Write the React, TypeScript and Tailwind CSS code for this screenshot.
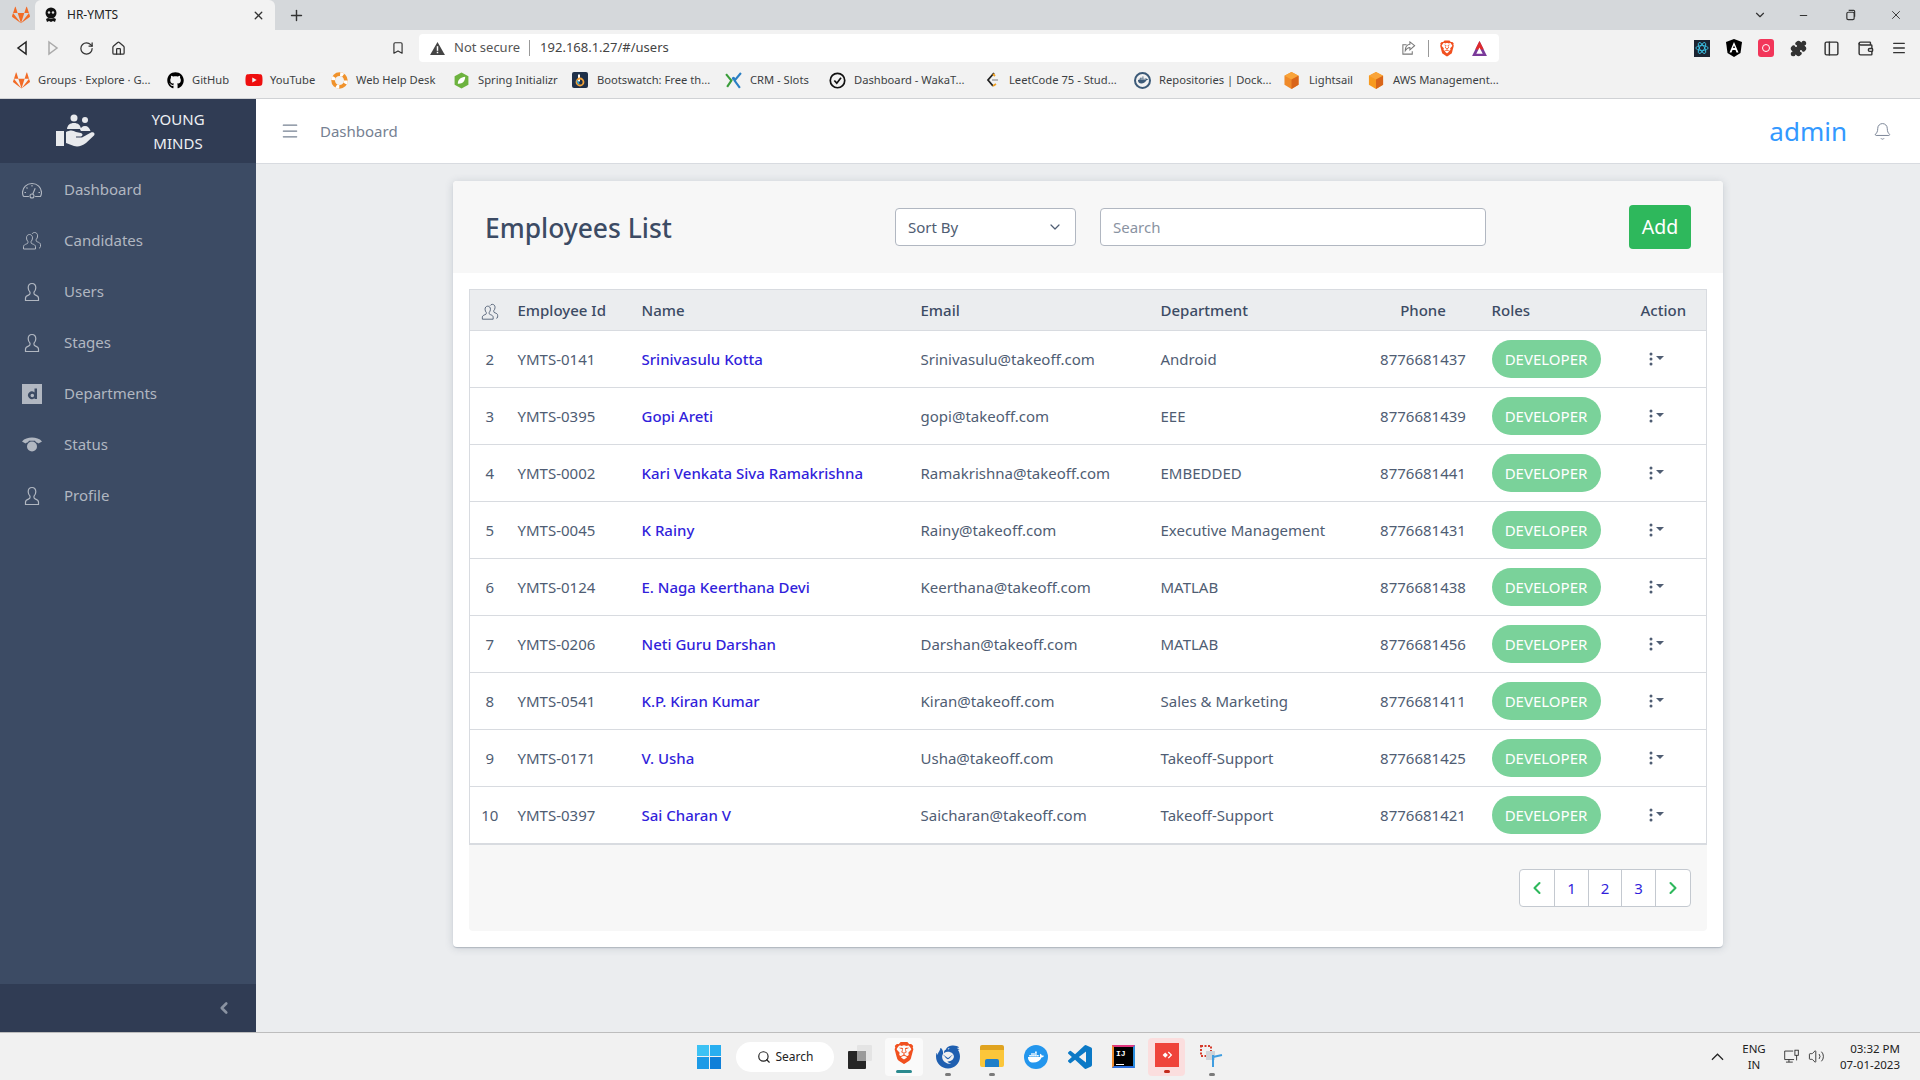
import { Bell, ChevronDown, ChevronLeft, ChevronRight, Menu, Minus, Plus, RotateCw, Search, X, Home, Bookmark, Puzzle, Wallet, PanelLeft, Volume2 } from "lucide-react";
import { FaGithub, FaGitlab, FaYoutube, FaDocker } from "react-icons/fa";
import { SiBrave, SiThunderbird } from "react-icons/si";

const rows = [
  ["2", "YMTS-0141", "Srinivasulu Kotta", "Srinivasulu@takeoff.com", "Android", "8776681437"],
  ["3", "YMTS-0395", "Gopi Areti", "gopi@takeoff.com", "EEE", "8776681439"],
  ["4", "YMTS-0002", "Kari Venkata Siva Ramakrishna", "Ramakrishna@takeoff.com", "EMBEDDED", "8776681441"],
  ["5", "YMTS-0045", "K Rainy", "Rainy@takeoff.com", "Executive Management", "8776681431"],
  ["6", "YMTS-0124", "E. Naga Keerthana Devi", "Keerthana@takeoff.com", "MATLAB", "8776681438"],
  ["7", "YMTS-0206", "Neti Guru Darshan", "Darshan@takeoff.com", "MATLAB", "8776681456"],
  ["8", "YMTS-0541", "K.P. Kiran Kumar", "Kiran@takeoff.com", "Sales & Marketing", "8776681411"],
  ["9", "YMTS-0171", "V. Usha", "Usha@takeoff.com", "Takeoff-Support", "8776681425"],
  ["10", "YMTS-0397", "Sai Charan V", "Saicharan@takeoff.com", "Takeoff-Support", "8776681421"],
];

function UserIcon({ className = "" }: { className?: string }) {
  return (
    <svg viewBox="0 0 20 20" fill="none" stroke="currentColor" strokeWidth="1.2" className={className}>
      <path d="M10 1.500c-2.300 0-3.800 1.700-3.800 4.200 0 2 .8 3.500 1.800 4.500v1.400c0 .7-.5 1.100-1.600 1.500-1.600.6-2.900 1.300-2.900 3v2.400h13v-2.400c0-1.700-1.300-2.400-2.900-3-1.100-.4-1.600-.8-1.600-1.500v-1.400c1-1 1.800-2.500 1.800-4.500 0-2.500-1.500-4.200-3.800-4.200z" />
    </svg>
  );
}
function PeopleIcon({ className = "" }: { className?: string }) {
  return (
    <svg viewBox="0 0 20 20" fill="none" stroke="currentColor" strokeWidth="1" className={className}>
      <path d="M7.500 3.500c-1.800 0-3 1.400-3 3.400 0 1.600.6 2.800 1.400 3.600v1.200c0 .6-.4.9-1.300 1.200-1.600.6-3.100 1.200-3.100 2.800v2.300h12v-2.300c0-1.600-1.500-2.200-3.100-2.800-.9-.3-1.300-.6-1.300-1.200v-1.200c.8-.8 1.400-2 1.400-3.600 0-2-1.200-3.400-3-3.400z" />
      <path d="M10 3c.6-1 1.500-1.500 2.600-1.500 1.800 0 3 1.400 3 3.400 0 1.600-.6 2.800-1.400 3.600v1.200c0 .6.4.9 1.300 1.200 1.600.6 3 1.200 3 2.800v1.800c0 .8-.6 1.500-1.500 1.500" />
    </svg>
  );
}
function GaugeIcon({ className = "" }: { className?: string }) {
  return (
    <svg viewBox="0 0 20 20" fill="none" stroke="currentColor" strokeWidth="1.100" className={className}>
      <path d="M1.500 16.500C.9 15.400.5 14 .5 12.600 .5 7.300 4.800 3.500 10 3.500s9.500 3.800 9.500 9.100c0 1.400-.4 2.800-1 3.900h-5.400M6.900 16.500H1.500" />
      <circle cx="10" cy="16" r="2" />
      <path d="M10.700 14.200l2.500-6M4 12.500h-1.500M5.500 8.500l-1-1M10 6.500v-1.500M16.500 12.500h1.500" />
    </svg>
  );
}
function Fox({ className = "" }: { className?: string }) {
  return <FaGitlab className={"text-[#f26b26] " + className} />;
}
function Cube({ color, className = "" }: { color: string; className?: string }) {
  return (
    <svg viewBox="0 0 16 18" className={className}>
      <polygon points="8,0 15.500,4 15.500,13.500 8,18 .5,13.500 .5,4" fill={color} />
      <polygon points="8,0 15.500,4 8,8 .5,4" fill="#f9a43a" />
      <polygon points="8,8 15.500,4 15.500,13.500 8,18" fill="#d9651a" />
    </svg>
  );
}

const bookmarks: [string, number, any][] = [
  ["Groups · Explore · G...", 154, <Fox className="w-[17px] h-[17px]" />],
  ["GitHub", 78, <FaGithub className="w-[17px] h-[17px] text-black" />],
  ["YouTube", 86, <FaYoutube className="w-[18px] h-[18px] text-[#ee0f0f]" />],
  ["Web Help Desk", 122, (
    <svg viewBox="0 0 16 16" className="w-[17px] h-[17px]">
      <circle cx="8" cy="8" r="6" fill="none" stroke="#f0922b" strokeWidth="3.500" />
      <circle cx="8" cy="8" r="6" fill="none" stroke="#fff" strokeWidth="3.500" strokeDasharray="3 6.400" />
    </svg>
  )],
  ["Spring Initializr", 119, (
    <svg viewBox="0 0 16 16" className="w-[17px] h-[17px]">
      <polygon points="8,.5 14.500,4 14.500,12 8,15.500 1.500,12 1.500,4" fill="#6db33f" />
      <path d="M4.500 11c0-4 3-6 7-6.500-.2 4.500-3 7-7 6.500z" fill="#fff" />
    </svg>
  )],
  ["Bootswatch: Free th...", 153, (
    <svg viewBox="0 0 16 16" className="w-[16px] h-[16px]">
      <rect width="16" height="16" rx="2" fill="#1f3049" />
      <path d="M7 2.500v7" stroke="#fff" strokeWidth="2" />
      <circle cx="8" cy="10" r="3.500" fill="none" stroke="#f3a33a" strokeWidth="1.800" />
      <path d="M5 8.500l2 3.500" stroke="#29a8e0" strokeWidth="1.500" />
    </svg>
  )],
  ["CRM - Slots", 104, (
    <svg viewBox="0 0 16 16" className="w-[17px] h-[17px]" fill="none">
      <path d="M1 2l5 6-4 6" stroke="#3a9d3a" strokeWidth="2" />
      <path d="M15 1l-6 7 5 7" stroke="#2a7fc4" strokeWidth="2" />
      <circle cx="8" cy="6" r="1.500" fill="#2a7fc4" />
    </svg>
  )],
  ["Dashboard - WakaT...", 155, (
    <svg viewBox="0 0 16 16" className="w-[17px] h-[17px]" fill="none" stroke="#111" strokeWidth="1.600">
      <circle cx="8" cy="8" r="6.800" />
      <path d="M5 8l2.300 2.500 4-5" />
    </svg>
  )],
  ["LeetCode 75 - Stud...", 150, (
    <svg viewBox="0 0 16 16" className="w-[16px] h-[16px]" fill="none" strokeWidth="1.800">
      <path d="M10 1L4 8l5 6" stroke="#222" />
      <path d="M11 4l-2-2M9 14l3-2" stroke="#f0a020" />
      <path d="M8 8h6" stroke="#b0b0b0" />
    </svg>
  )],
  ["Repositories | Dock...", 150, (
    <span className="flex items-center justify-center w-[17px] h-[17px] rounded-full border-2 border-[#3c5a78]">
      <FaDocker className="w-[10px] h-[10px] text-[#3c5a78]" />
    </span>
  )],
  ["Lightsail", 84, <Cube color="#ef8a2a" className="w-[15px] h-[17px]" />],
  ["AWS Management...", 140, <Cube color="#f79a1f" className="w-[16px] h-[17px]" />],
];

const nav: [string, any][] = [
  ["Dashboard", <GaugeIcon className="w-[20px] h-[20px]" />],
  ["Candidates", <PeopleIcon className="w-[20px] h-[20px]" />],
  ["Users", <UserIcon className="w-[20px] h-[20px]" />],
  ["Stages", <UserIcon className="w-[20px] h-[20px]" />],
  ["Departments", (
    <svg viewBox="0 0 20 20" className="w-[20px] h-[20px]">
      <rect width="20" height="20" fill="#b1b7c1" />
      <path d="M12.500 4.500h2.500v10.500h-2.500v-1a3.800 3.800 0 1 1 0-5.500zM10.300 9.700a1.800 1.800 0 1 0 0 3.600 1.800 1.800 0 0 0 0-3.600z" fill="#3c4b64" fillRule="evenodd" />
    </svg>
  )],
  ["Status", (
    <svg viewBox="0 0 20 20" className="w-[20px] h-[20px]" fill="#b1b7c1">
      <path d="M0 6.500C2.500 3.500 6 2.500 10 2.500s7.500 1 10 4l-3.500 2c-.8-.8-1.500-1-2.500-1.200L13 5.800H7l-1 1.500c-1 .2-1.700.4-2.500 1.200z" />
      <circle cx="10" cy="11.500" r="5" />
    </svg>
  )],
  ["Profile", <UserIcon className="w-[20px] h-[20px]" />],
];

function ActionIcon() {
  return (
    <svg viewBox="0 0 16 14" className="w-[16px] h-[14px] text-[#4f5d73] -mt-[1px]" fill="currentColor">
      <circle cx="2" cy="2" r="1.500" />
      <circle cx="2" cy="7" r="1.500" />
      <circle cx="2" cy="12" r="1.500" />
      <polygon points="7,4 15,4 11,8" />
    </svg>
  );
}

function Bookmarks() {
  return (
    <div className="h-[33px] flex items-center pb-[4px] pl-[13px] bg-[#f2f2f2] border-b border-[#d0d2d5]">
      {bookmarks.map(([t, w, icon]) => (
        <div key={t} className="flex items-center shrink-0" style={{ width: w }}>
          <span className="w-[25px] shrink-0 flex items-center">{icon}</span>
          <span className="text-[11.200px] text-[#3c3f43] whitespace-nowrap">{t}</span>
        </div>
      ))}
    </div>
  );
}

function Browser() {
  return (
    <div className="shrink-0 font-['Noto_Sans',sans-serif]">
      <div className="h-[30px] bg-[#d5d8db] flex items-end">
        <div className="w-[35px] h-[30px] flex items-center justify-center"><Fox className="w-[18px] h-[18px] ml-[6px]" /></div>
        <div className="w-[240px] h-[30px] bg-[#f2f2f2] rounded-t-[6px] flex items-center pl-[8px] pr-[10px]">
          <svg viewBox="0 0 16 16" className="w-[16px] h-[16px] shrink-0 mr-[8px]">
            <circle cx="8" cy="6" r="5.500" fill="#111" />
            <circle cx="6" cy="5.500" r="1.200" fill="#ddd" />
            <circle cx="10" cy="5.500" r="1.200" fill="#ddd" />
            <path d="M3 12l2-1 3 1 3-1 2 1-1 3-2-1-2 1-2-1-2 1z" fill="#111" />
          </svg>
          <span className="text-[12px] text-[#222] flex-1">HR-YMTS</span>
          <X className="w-[13px] h-[13px] text-[#333]" strokeWidth={2.500} />
        </div>
        <div className="w-[42px] h-[30px] flex items-center justify-center"><Plus className="w-[17px] h-[17px] text-[#333]" strokeWidth={2} /></div>
        <div className="flex-1 h-[30px] flex items-center justify-end text-[#333]">
          <ChevronDown className="w-[14px] h-[14px] mr-[31px]" />
          <Minus className="w-[11px] h-[11px] mr-[36px]" strokeWidth={2.500} />
          <svg viewBox="0 0 12 12" className="w-[11px] h-[12px] mr-[33px]" fill="none" stroke="currentColor" strokeWidth="1.300"><rect x="2" y="3" width="8" height="8" rx="1.500" /><path d="M4 1h5.500a1 1 0 0 1 1 1v6" /></svg>
          <X className="w-[14px] h-[14px] mr-[17px]" strokeWidth={1.600} />
        </div>
      </div>
      <div className="h-[36px] bg-[#f2f2f2] flex items-center text-[#333]">
        <svg viewBox="0 0 12 16" className="w-[12px] h-[16px] ml-[16px]" fill="none" stroke="#222" strokeWidth="1.500"><path d="M10 2L2 8l8 6z" /></svg>
        <svg viewBox="0 0 12 16" className="w-[12px] h-[16px] ml-[19px]" fill="none" stroke="#aaa" strokeWidth="1.500"><path d="M2 2l8 6-8 6z" /></svg>
        <RotateCw className="w-[15px] h-[15px] ml-[20px]" strokeWidth={2} />
        <Home className="w-[15px] h-[15px] ml-[17px]" strokeWidth={2} />
        <Bookmark className="w-[14px] h-[16px] ml-[265px]" strokeWidth={2} />
        <div className="ml-[14px] w-[1080px] h-[28px] bg-white rounded-[4px] flex items-center pl-[11px] pr-[11px]">
          <svg viewBox="0 0 16 14" className="w-[15px] h-[13px]"><path d="M8 0l8 14H0z" fill="#444" /><rect x="7.200" y="4.500" width="1.600" height="5" fill="#fff" /><rect x="7.200" y="10.500" width="1.600" height="1.600" fill="#fff" /></svg>
          <span className="text-[13px] text-[#555] ml-[9px]">Not secure</span>
          <span className="w-px h-[16px] bg-[#999] mx-[9px]" />
          <span className="text-[13px] text-[#444] flex-1 pl-[1px]">192.168.1.27/#/users</span>
          <svg viewBox="0 0 16 16" className="w-[15px] h-[15px] mr-[12px]" fill="none" stroke="#777" strokeWidth="1.100"><path d="M6 4H2v10h10v-3" /><path d="M14.500 5L9.500 1v2.500C6 4 4.500 6.500 4.500 10.500 6 8 7.500 7 9.500 7v2.500z" /></svg>
          <span className="w-px h-[17px] bg-[#999] mr-[10px]" />
          <SiBrave className="w-[16px] h-[17px] text-[#f1501f] mr-[16px]" />
          <svg viewBox="0 0 16 16" className="w-[17px] h-[17px]"><path d="M8 1l7 14H1z" fill="#7a3a9a" /><path d="M8 1l4 8H4z" fill="#e02a2a" /><path d="M8 7l3 6H5z" fill="#fff" /></svg>
        </div>
        <div className="flex items-center ml-[195px] gap-[16px]">
          <span className="w-[16px] h-[17px] bg-[#1b2432] flex items-center justify-center">
            <svg viewBox="0 0 16 16" className="w-[14px] h-[14px]" fill="none" stroke="#3cc4e8" strokeWidth="1"><ellipse cx="8" cy="8" rx="7" ry="2.800" /><ellipse cx="8" cy="8" rx="7" ry="2.800" transform="rotate(60 8 8)" /><ellipse cx="8" cy="8" rx="7" ry="2.800" transform="rotate(120 8 8)" /></svg>
          </span>
          <svg viewBox="0 0 16 18" className="w-[16px] h-[18px]"><path d="M8 0l8 3-1.500 11L8 18l-6.500-4L0 3z" fill="#000" /><path d="M8 3l4.500 10.500h-2L9.500 11h-3l-1 2.500h-2zM8 6.500L7 9h2z" fill="#fff" /></svg>
          <span className="w-[16px] h-[18px] rounded-[3px] bg-[#f2365a] flex items-center justify-center"><span className="w-[8px] h-[8px] rounded-full border border-white" /></span>
          <Puzzle className="w-[17px] h-[17px] text-[#333] fill-[#333]" />
          <PanelLeft className="w-[17px] h-[17px] text-[#333]" strokeWidth={2} />
          <Wallet className="w-[17px] h-[17px] text-[#333] ml-[1px]" strokeWidth={2} />
          <Menu className="w-[16px] h-[16px] text-[#333] ml-[1px]" strokeWidth={2} />
        </div>
      </div>
      <Bookmarks />
    </div>
  );
}

function Dot() {
  return <span className="absolute top-[28px] left-1/2 -translate-x-1/2 w-[6px] h-[3px] rounded-full bg-[#7a7a7a]" />;
}

function Taskbar() {
  return (
    <div className="h-[48px] shrink-0 bg-[#f1f1f1] border-t border-[#bdbdbd] flex items-center font-['Noto_Sans',sans-serif]">
      <div className="ml-[697px] w-[24px] h-[24px] grid grid-cols-2 gap-[1px] shrink-0">
        <span className="bg-[#3cc2f4]" /><span className="bg-[#28aef0]" /><span className="bg-[#1c9ae6]" /><span className="bg-[#0f7fd8]" />
      </div>
      <div className="ml-[15px] w-[98px] h-[30px] rounded-full bg-white flex items-center justify-center gap-[5px] shrink-0">
        <Search className="w-[14px] h-[14px] text-[#222]" strokeWidth={2} />
        <span className="text-[12px] text-[#222]">Search</span>
      </div>
      <svg viewBox="0 0 24 24" className="ml-[14px] w-[24px] h-[24px] shrink-0">
        <rect x="9" y="0" width="15" height="16" rx="1" fill="#e4e4e4" />
        <rect x="0" y="6" width="18" height="18" rx="1" fill="#262626" />
        <rect x="9" y="6" width="9" height="10" fill="#9a9a9a" />
      </svg>
      <div className="ml-[13px] w-[38px] h-[38px] rounded-[4px] bg-[#fafafa] flex flex-col items-center justify-center shrink-0">
        <SiBrave className="w-[22px] h-[24px] text-[#f1501f]" />
        <span className="w-[16px] h-[3px] rounded-full bg-[#2b8a8f] mt-[5px]" />
      </div>
      <div className="ml-[13px] w-[24px] h-[24px] shrink-0 relative">
        <SiThunderbird className="w-[24px] h-[24px] text-[#1f5fb0]" />
        <Dot />
      </div>
      <div className="ml-[20px] w-[24px] h-[24px] shrink-0 relative">
        <div className="w-[24px] h-[22px] rounded-[2px] bg-[#fbc63a] border-t-[5px] border-[#e0a31f] flex items-end justify-center">
          <span className="w-[14px] h-[8px] bg-[#1f7fc9] rounded-t-[2px]" />
        </div>
        <Dot />
      </div>
      <span className="ml-[20px] w-[24px] h-[24px] shrink-0 rounded-full bg-[#2396ed] flex items-center justify-center">
        <FaDocker className="w-[16px] h-[16px] text-white" />
      </span>
      <svg viewBox="0 0 24 24" className="ml-[20px] w-[24px] h-[24px] shrink-0" fill="#0b79c6">
        <path d="M23.150 2.587L18.210.21a1.494 1.494 0 0 0-1.705.29l-9.460 8.630-4.120-3.128a.999.999 0 0 0-1.276.057L.327 7.261A1 1 0 0 0 .326 8.740L3.899 12 .326 15.260a1 1 0 0 0 .001 1.479L1.650 17.940a.999.999 0 0 0 1.276.057l4.120-3.128 9.460 8.630a1.492 1.492 0 0 0 1.704.29l4.942-2.377A1.500 1.500 0 0 0 24 20.060V3.939a1.500 1.500 0 0 0-.850-1.352zm-5.146 14.861L10.826 12l7.178-5.448v10.896z" />
      </svg>
      <span className="ml-[20px] w-[23px] h-[23px] shrink-0 bg-black border-[2px] border-t-[#e0367e] border-l-[#f08a2a] border-r-[#2a8fe0] border-b-[#2a6fe0] flex flex-col items-start justify-between p-[2px] pb-[1px]">
        <span className="text-[8px] leading-[9px] font-bold text-white font-['Liberation_Mono',monospace]">IJ</span>
        <span className="w-[8px] h-[1.500px] bg-white" />
      </span>
      <div className="ml-[13px] w-[37px] h-[38px] shrink-0 rounded-[4px] bg-[#fbdede] flex flex-col items-center justify-center">
        <span className="w-[24px] h-[24px] bg-[#ef443b] flex items-center justify-center mt-[2px]">
          <svg viewBox="0 0 16 16" className="w-[14px] h-[14px]" fill="#fff"><polygon points="4,8 7,5 10,8 7,11" transform="translate(-1 0)" /><path d="M10 4l4 4-4 4-1-1 3-3-3-3z" /></svg>
        </span>
        <span className="w-[6px] h-[3px] rounded-full bg-[#c42b1c] mt-[3px]" />
      </div>
      <div className="ml-[15px] w-[24px] h-[24px] shrink-0 relative">
        <svg viewBox="0 0 24 24" className="w-[24px] h-[24px]" fill="none">
          <rect x="1" y="1" width="10" height="10" stroke="#d53a2a" strokeWidth="2" strokeDasharray="2 1.500" />
          <rect x="6" y="6" width="9" height="9" fill="#cfd3d8" />
          <path d="M13 12l9-2M13 10v12" stroke="#3f9de0" strokeWidth="2" />
        </svg>
        <Dot />
      </div>
      <div className="flex-1" />
      <svg viewBox="0 0 14 8" className="w-[13px] h-[8px]" fill="none" stroke="#222" strokeWidth="1.300"><path d="M1 7l6-6 6 6" /></svg>
      <div className="w-[26px] ml-[17px] text-[11.500px] leading-[16px] text-[#222] text-center whitespace-nowrap flex flex-col items-center">
        <span>ENG</span><span>IN</span>
      </div>
      <svg viewBox="0 0 20 18" className="ml-[16px] w-[17px] h-[16px]" fill="none" stroke="#222" strokeWidth="1"><path d="M12 2H2v10h11M7 12v3M3.500 15h8" /><rect x="14" y="1" width="4" height="6" /><path d="M16 7v6" /></svg>
      <Volume2 className="ml-[8px] w-[17px] h-[17px] text-[#222]" strokeWidth={1.200} />
      <div className="w-[74px] ml-[1px] mr-[20px] text-[11.500px] leading-[16px] text-[#222] text-right whitespace-nowrap">
        <div>03:32 PM</div>
        <div>07-01-2023</div>
      </div>
    </div>
  );
}

export default function App() {
  return (
    <div className="w-[1920px] h-[1080px] overflow-hidden flex flex-col bg-[#ebedef] font-['Noto_Sans',sans-serif]">
      <Browser />
      <div className="flex-1 flex min-h-0">
        <aside className="w-[256px] shrink-0 bg-[#3c4b64] flex flex-col">
          <div className="h-[64px] shrink-0 bg-[#303c54] flex items-center">
            <svg viewBox="0 0 42 34" className="w-[42px] h-[34px] ml-[56px]" fill="#e8eaed">
              <circle cx="18" cy="4" r="3.500" /><circle cx="29" cy="6" r="3" />
              <path d="M11 15c.5-4 3-6 7-6s6.500 2 7 6zM24 15.500c1-1.500 2-3.500 5-3.500s4.500 2 5.500 5H25z" />
              <rect x="0" y="17" width="8" height="15" />
              <path d="M10 18c4-2 7-2 10 0l5 1c2 .5 2 3 0 3.500h-5v1h6l9-5c2.500-1 4.500 1 3 3L30 29c-4 3-8 4-12 3l-8-3z" />
            </svg>
            <div className="ml-[50px] w-[60px] text-center text-[15px] leading-[24px] text-[#eef0f3]">YOUNG<br />MINDS</div>
          </div>
          <nav className="flex-1 pt-[1px]">
            {nav.map(([t, icon]) => (
              <div key={t} className="h-[51px] flex items-center pl-[22px] text-[#b1b7c1]">
                <span className="w-[20px] h-[20px] shrink-0">{icon}</span>
                <span className="ml-[22px] text-[15px]">{t}</span>
              </div>
            ))}
          </nav>
          <div className="h-[48px] shrink-0 bg-[#303c54] flex items-center justify-end pr-[23px]">
            <ChevronLeft className="w-[18px] h-[18px] text-[#8a93a2]" strokeWidth={3.500} />
          </div>
        </aside>
        <main className="flex-1 min-w-0 flex flex-col">
          <header className="h-[65px] shrink-0 bg-white border-b border-[#d8dbe0] flex items-center">
            <Menu className="ml-[24px] w-[20px] h-[20px] text-[#768192]" strokeWidth={1.500} />
            <span className="ml-[20px] text-[15px] text-[#768192]">Dashboard</span>
            <span className="ml-auto text-[26px] leading-none text-[#3399ff]">admin</span>
            <Bell className="ml-[26px] mr-[28px] w-[19px] h-[19px] text-[#768192]" strokeWidth={1.200} />
          </header>
          <div className="flex-1 pt-[17px]">
            <div className="mx-auto w-[1270px] h-[766px] bg-white rounded-[4px] shadow-[0_1px_1px_0_rgba(60,75,100,.14),0_2px_1px_-1px_rgba(60,75,100,.12),0_1px_8px_0_rgba(60,75,100,.2)] flex flex-col">
              <div className="h-[92px] shrink-0 bg-[#f7f7f7] rounded-t-[4px] flex items-center">
                <h1 className="ml-[32px] pt-[3px] text-[26.400px] font-medium text-[#3c4b64] w-[410px]">Employees List</h1>
                <div className="w-[181px] h-[38px] bg-white border border-[#b1b7c1] rounded-[4px] flex items-center justify-between pl-[12px] pr-[12px] text-[15px] text-[#4f5d73]">
                  <span>Sort By</span>
                  <ChevronDown className="w-[16px] h-[16px]" strokeWidth={1.800} />
                </div>
                <div className="ml-[24px] w-[386px] h-[38px] bg-white border border-[#b1b7c1] rounded-[4px] flex items-center pl-[12px] text-[15px] text-[#8a93a2]">Search</div>
                <button className="ml-auto mr-[32px] w-[62px] h-[44px] bg-[#2eb85c] rounded-[4px] text-[19.500px] text-white">Add</button>
              </div>
              <div className="flex-1 p-[16px] flex flex-col min-h-0">
                <table className="w-full table-fixed border-collapse border border-[#d8dbe0] text-[15px] text-[#4f5d73]">
                  <colgroup>
                    <col className="w-[36px]" />
                    <col className="w-[124px]" />
                    <col className="w-[279px]" />
                    <col className="w-[240px]" />
                    <col className="w-[220px]" />
                    <col className="w-[111px]" />
                    <col className="w-[149px]" />
                    <col />
                  </colgroup>
                  <thead>
                    <tr className="h-[41px] bg-[#ebedef] text-[#3c4b64]">
                      <th className="font-medium text-center pl-[4px]"><PeopleIcon className="w-[18px] h-[18px] inline-block text-[#4f5d73]" /></th>
                      <th className="font-medium text-left pl-[12px]">Employee Id</th>
                      <th className="font-medium text-left pl-[12px]">Name</th>
                      <th className="font-medium text-left pl-[12px]">Email</th>
                      <th className="font-medium text-left pl-[12px]">Department</th>
                      <th className="font-medium text-center pr-[2px]">Phone</th>
                      <th className="font-medium text-left pl-[12px]">Roles</th>
                      <th className="font-medium text-left pl-[12px]">Action</th>
                    </tr>
                  </thead>
                  <tbody>
                    {rows.map((r) => (
                      <tr key={r[0]} className="h-[57px] border-t border-[#d8dbe0]">
                        <td className="text-center pl-[4px]">{r[0]}</td>
                        <td className="pl-[12px]">{r[1]}</td>
                        <td className="pl-[12px] font-medium text-[#321fdb] whitespace-nowrap">{r[2]}</td>
                        <td className="pl-[12px]">{r[3]}</td>
                        <td className="pl-[12px]">{r[4]}</td>
                        <td className="text-center pr-[2px]">{r[5]}</td>
                        <td className="pl-[12px]">
                          <span className="w-[109px] h-[38px] rounded-full bg-[#7ad29a] text-white flex items-center justify-center">DEVELOPER</span>
                        </td>
                        <td className="pl-[20px]"><ActionIcon /></td>
                      </tr>
                    ))}
                  </tbody>
                </table>
                <div className="flex-1 bg-[#f7f7f7] rounded-b-[4px] border-t border-[#d8dbe0] flex items-start justify-end pt-[24px] pr-[16px]">
                  <div className="h-[38px] w-[172px] bg-white border border-[#c4c9d0] rounded-[4px] flex text-[15px] text-[#321fdb]">
                    <span className="flex-1 flex items-center justify-center"><ChevronLeft className="w-[20px] h-[20px] text-[#2eb85c]" strokeWidth={2.500} /></span>
                    <span className="w-[34px] border-l border-[#c4c9d0] flex items-center justify-center">1</span>
                    <span className="w-[33px] border-l border-[#c4c9d0] flex items-center justify-center">2</span>
                    <span className="w-[34px] border-l border-[#c4c9d0] flex items-center justify-center">3</span>
                    <span className="w-[35px] border-l border-[#c4c9d0] flex items-center justify-center"><ChevronRight className="w-[20px] h-[20px] text-[#2eb85c]" strokeWidth={2.500} /></span>
                  </div>
                </div>
              </div>
            </div>
          </div>
        </main>
      </div>
      <Taskbar />
    </div>
  );
}
